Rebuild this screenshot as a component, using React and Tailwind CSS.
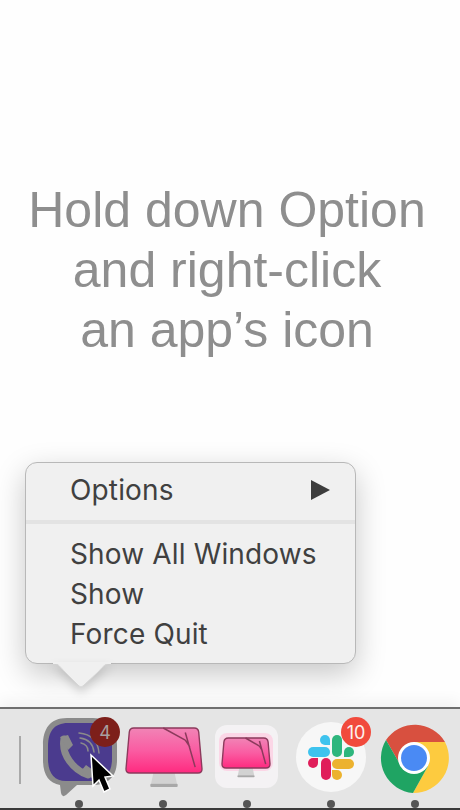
const Dot = () => <div className="w-2 h-2 rounded-full bg-[#555555]" />;

const MacIcon = ({ id, x, y, w, h }) => {
  // screen is a trapezoid, stand hangs below it
  const topInset = w * 0.05;
  const bottom = y + h;
  const cx = x + w / 2;
  return (
    <g>
      <path
        d={`M${cx - w * 0.14} ${bottom} L${cx - w * 0.17} ${bottom + h * 0.24} L${cx + w * 0.17} ${bottom + h * 0.24} L${cx + w * 0.14} ${bottom} Z`}
        fill="#d2d2d2"
      />
      <rect x={cx - w * 0.18} y={bottom + h * 0.24} width={w * 0.36} height={h * 0.07} rx="1" fill="#a8a8a8" />
      <path
        d={`M${x + topInset + 4} ${y} L${x + w - topInset - 4} ${y} Q${x + w - topInset} ${y} ${x + w - topInset + 0.5} ${y + 4} L${x + w} ${bottom - 4} Q${x + w} ${bottom} ${x + w - 4} ${bottom} L${x + 4} ${bottom} Q${x} ${bottom} ${x} ${bottom - 4} L${x + topInset - 0.5} ${y + 4} Q${x + topInset} ${y} ${x + topInset + 4} ${y} Z`}
        fill={`url(#${id})`}
        stroke="#8c3a5c"
        strokeWidth="1.4"
      />
      <path
        d={`M${x + w * 0.49} ${y} L${x + w * 0.78} ${y + h * 0.27} M${x + w * 0.78} ${y + h * 0.1} L${x + w * 0.91} ${y + h * 0.87} M${x + w * 0.78} ${y + h * 0.27} L${x + w * 0.84} ${y + h * 0.42}`}
        stroke="#8c3a5c"
        strokeWidth="1.5"
        fill="none"
      />
    </g>
  );
};

const Gradients = ({ id }) => (
  <defs>
    <linearGradient id={id} x1="0" y1="0" x2="0" y2="1">
      <stop offset="0" stopColor="#f184b6" />
      <stop offset="0.5" stopColor="#fa5ca2" />
      <stop offset="1" stopColor="#ff2a7f" />
    </linearGradient>
  </defs>
);

const Badge = ({ label, className }) => (
  <div className={`absolute top-[7px] w-[30px] h-[30px] rounded-full flex items-center justify-center text-[18px] ${className}`}>
    {label}
  </div>
);

const App = () => {
  return (
    <div className="w-[460px] h-[810px] bg-[#fefefe] flex flex-col overflow-hidden font-['Inter',sans-serif]">
      <h1 className="pt-[180px] pr-[6px] text-center text-[50px] leading-[60px] font-normal text-[#8e8e8e] font-['Liberation_Sans',sans-serif]">
        Hold down Option
        <br />
        and right-click
        <br />
        an app’s icon
      </h1>

      {/* Context menu */}
      <div className="relative mt-[102px] ml-[25px] w-[331px] h-[202px] bg-[#f0f0f0] border border-[#b8b8b8] rounded-[12px] shadow-[0_10px_30px_rgba(0,0,0,0.22)] text-[28px] tracking-[0.15px] text-[#404040]">
        <div className="h-[57px] pb-[4px] pl-[44px] pr-[25px] flex items-center justify-between">
          <span>Options</span>
          <svg width="19" height="20" viewBox="0 0 19 20">
            <path d="M0 0 L19 10 L0 20 Z" fill="#3c3c3c" />
          </svg>
        </div>
        <div className="h-[4px] bg-[#e3e3e3]" />
        <div className="pt-[10px] pl-[44px] flex flex-col">
          <span className="leading-[40px]">Show All Windows</span>
          <span className="leading-[40px]">Show</span>
          <span className="leading-[40px]">Force Quit</span>
        </div>
        <svg className="absolute left-[26px] top-[199px] drop-shadow-[0_5px_5px_rgba(0,0,0,0.16)]" width="60" height="28" viewBox="0 0 60 28">
          <path
            d="M1 1 C6 1 9 6 13 10 L27 24 Q29 26 31 24 L46 10 C50 6 53 1 59 1"
            fill="#f0f0f0"
            stroke="#d6d6d6"
            strokeWidth="1"
          />
          <rect x="1" y="0" width="58" height="2" fill="#f0f0f0" />
        </svg>
      </div>

      {/* Dock */}
      <div className="relative mt-auto h-[103px] pt-px bg-[#e5e5e5] border-t-2 border-[#6f6f6f] border-b-2 border-b-[#3a3a3a] shadow-[0_-6px_14px_rgba(0,0,0,0.05)] flex">
        <div className="w-[37px] pt-[26px] pl-[19px]">
          <div className="w-[2px] h-[48px] bg-[#a9a9a9]" />
        </div>

        <div className="relative w-[84px] flex flex-col items-center">
          <svg width="84" height="90" viewBox="37 710 84 90">
            <path
              d="M67 718 L93 718 C110 718 117 729 117 745 L117 760 C117 777 108 785 92 785 L77 785 L66 795 Q62 798 61 793 L60 785 C49 783 43 775 43 760 L43 745 C43 729 50 718 67 718 Z"
              fill="#8b8b8b"
            />
            <path
              d="M68 723 L92 723 C106 723 112 732 112 746 L112 759 C112 773 105 781 91 781 L66 781 C54 781 48 773 48 759 L48 746 C48 732 54 723 68 723 Z"
              fill="#4b3b8e"
            />
            <path d="M64 739 C61 755 74 770 88 775" stroke="#8b8b8b" strokeWidth="7" fill="none" strokeLinecap="round" />
            <path d="M60 737 L68 735 L73 745 L68 750 Z M81 771 L86 765 L93 770 L92 778 Z" fill="#8b8b8b" />
            <path
              d="M79 733 C91 734 98 741 99 753 M80 738 C88 739 93 744 94 752 M81 743 C85 744 88 747 88 751"
              stroke="#8b8b8b"
              strokeWidth="1.5"
              fill="none"
              strokeLinecap="round"
            />
            <path
              d="M91 755 L93 786 L99 780 L104 792 L110 789 L105 777 L113 776 Z"
              fill="#000000"
              stroke="#ffffff"
              strokeWidth="1.5"
            />
          </svg>
          <Dot />
          <Badge label="4" className="left-[53px] bg-[#7d1f1a] text-[#a8a0a0]" />
        </div>

        <div className="w-[84px] flex flex-col items-center">
          <svg width="84" height="90" viewBox="121 710 84 90">
            <Gradients id="screen1" />
            <MacIcon id="screen1" x={126} y={728} w={76} h={45} />
          </svg>
          <Dot />
        </div>

        <div className="w-[84px] flex flex-col items-center">
          <svg width="84" height="90" viewBox="205 710 84 90">
            <Gradients id="screen2" />
            <rect x="215" y="725" width="63" height="63" rx="12" fill="#f4f2f4" />
            <rect x="219" y="733" width="54" height="38" rx="8" fill="#fbd6e6" />
            <MacIcon id="screen2" x={222} y={738} w={48} h={30} />
          </svg>
          <Dot />
        </div>

        <div className="relative w-[84px] flex flex-col items-center">
          <svg width="84" height="90" viewBox="289 710 84 90">
            <circle cx="331" cy="757" r="35" fill="#f7f7f7" />
            <rect x="308" y="747" width="22" height="10" rx="5" fill="#3ec3ee" />
            <path d="M320 740 a5 5 0 0 1 10 0 v5 h-5 a5 5 0 0 1 -5 -5 Z" fill="#3ec3ee" />
            <rect x="332" y="735" width="10" height="22" rx="5" fill="#2eb67d" />
            <path d="M344 752 a5 5 0 1 1 5 5 h-5 Z" fill="#2eb67d" />
            <path d="M318 763 a5 5 0 1 1 -5 -5 h5 Z" fill="#e01e5a" />
            <rect x="321" y="758" width="10" height="22" rx="5" fill="#e01e5a" />
            <rect x="332" y="759" width="22" height="10" rx="5" fill="#ecb22e" />
            <path d="M332 770 h5 a5 5 0 1 1 -5 5 Z" fill="#ecb22e" />
          </svg>
          <Dot />
          <Badge label="10" className="left-[52px] bg-[#f14a3c] text-[#fdf0ee]" />
        </div>

        <div className="w-[84px] flex flex-col items-center">
          <svg width="84" height="90" viewBox="373 710 84 90">
            <path d="M445 742 A35 35 0 0 0 386 740 L401 766 L414 742 Z" fill="#d8503f" />
            <path d="M445 742 A35 35 0 0 1 413 793 L428 766 L414 742 Z" fill="#fdcb3f" />
            <path d="M386 740 A35 35 0 0 0 413 793 L428 766 L401 766 Z" fill="#1fa463" />
            <circle cx="414" cy="758" r="16" fill="#ffffff" />
            <circle cx="414" cy="758" r="13" fill="#4a8af4" />
          </svg>
          <Dot />
        </div>
      </div>
    </div>
  );
};

export default App;
